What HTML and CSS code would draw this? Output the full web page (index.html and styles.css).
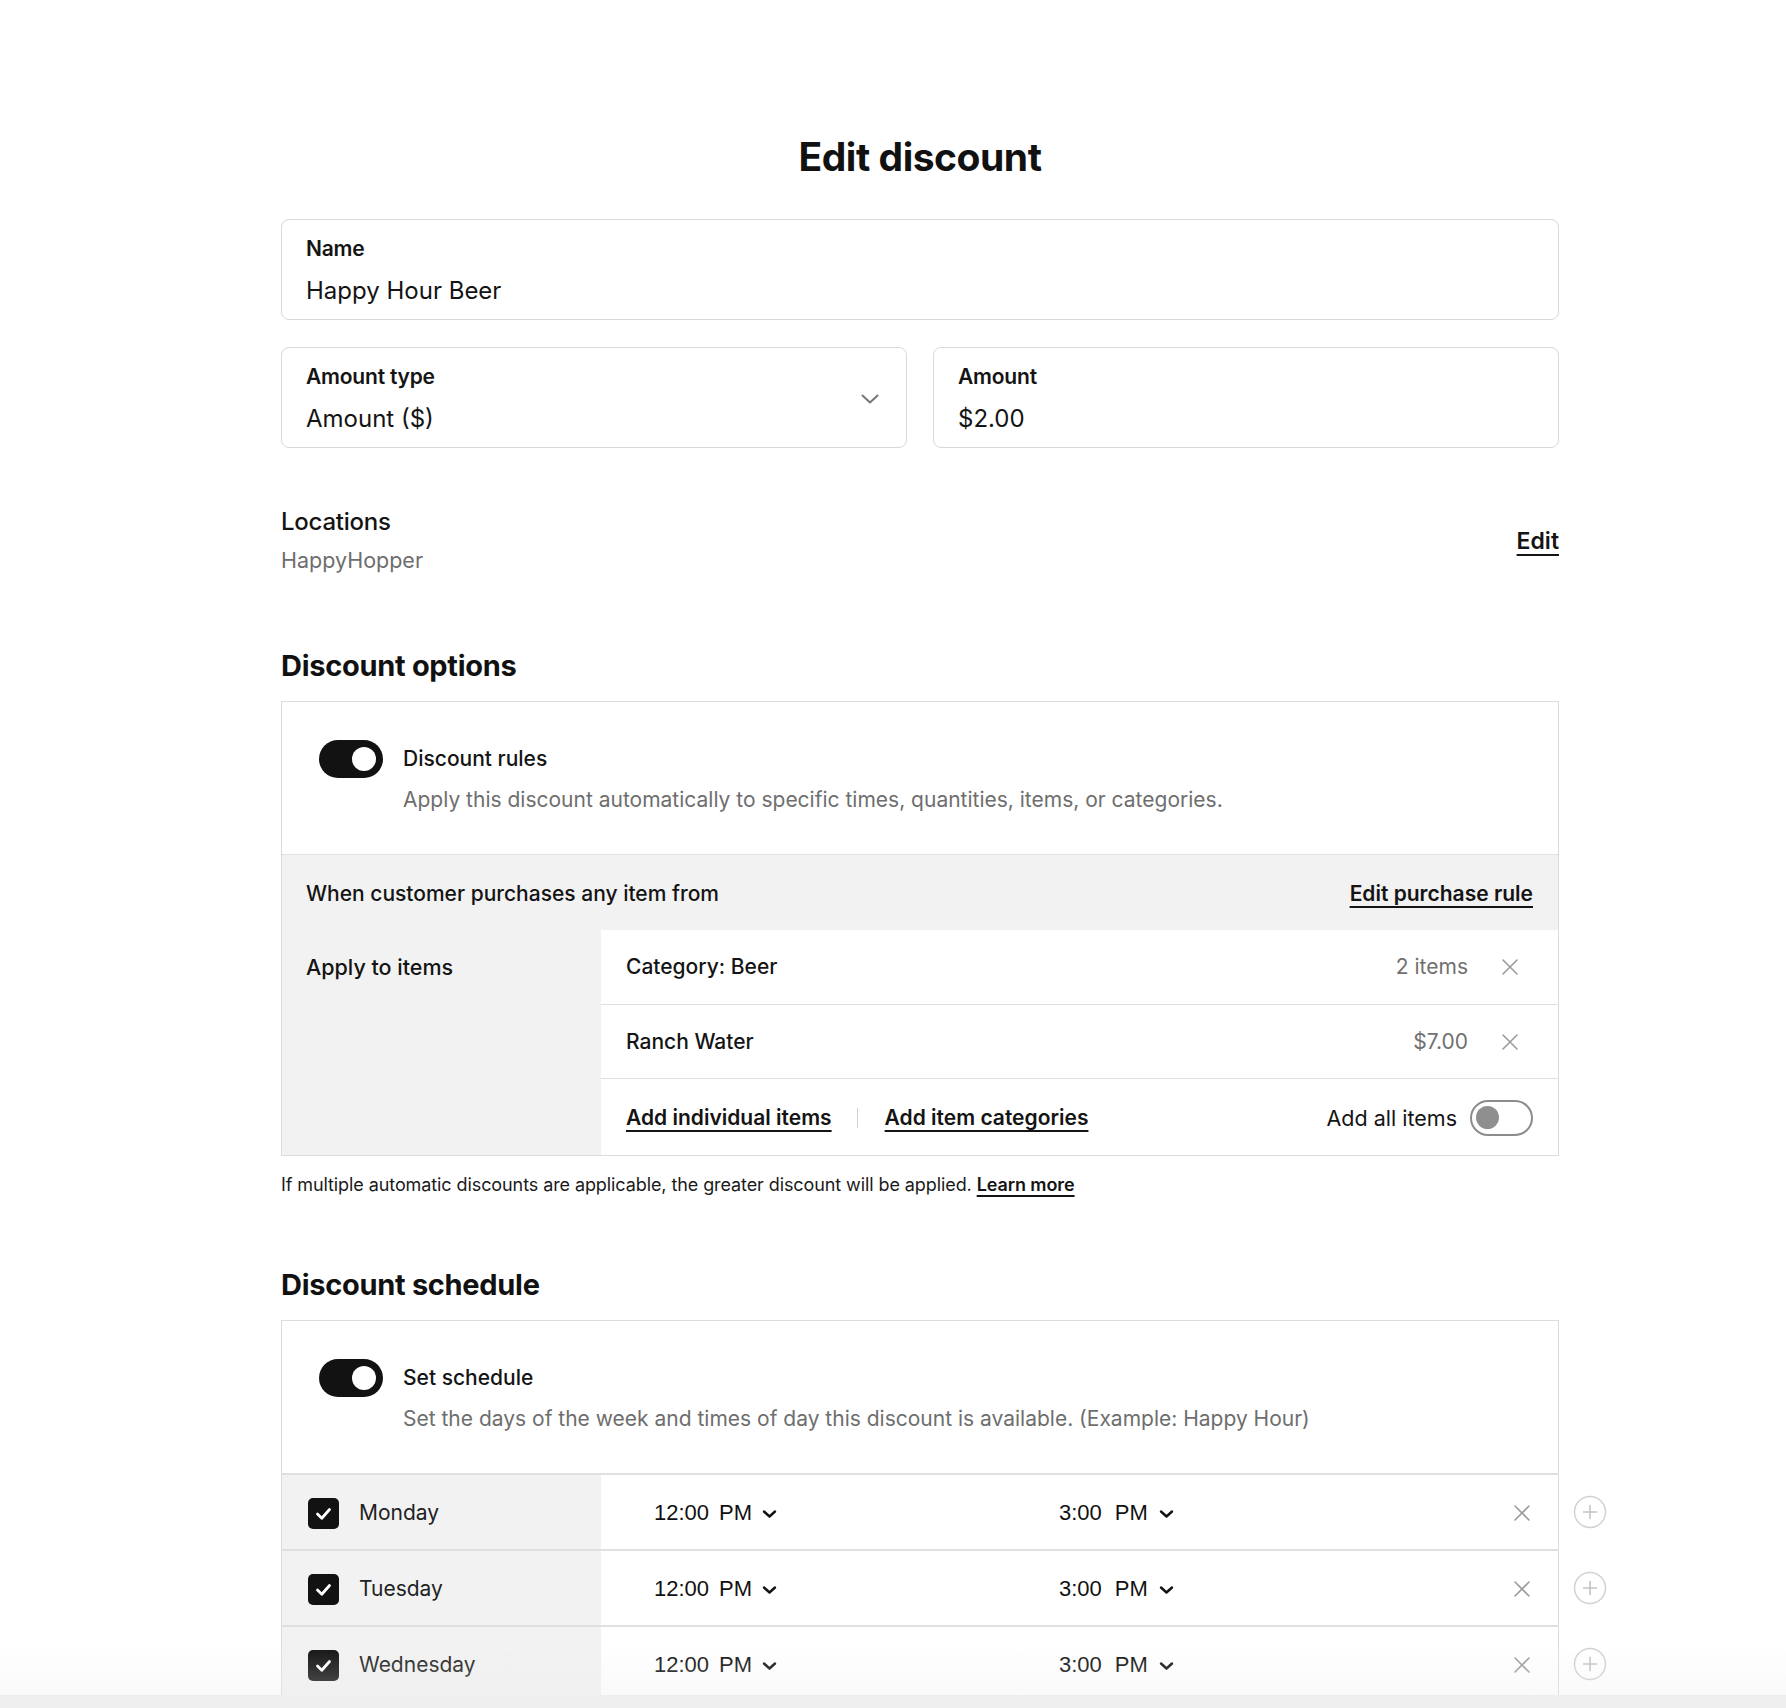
FILE: index.html
```html
<!DOCTYPE html>
<html lang="en">
<head>
<meta charset="utf-8">
<title>Edit discount</title>
<link rel="stylesheet" href="styles.css">
</head>
<body>
<main class="container">
  <h1 class="title">Edit discount</h1>

  <div class="field">
    <div class="field-label">Name</div>
    <div class="field-value">Happy Hour Beer</div>
  </div>

  <div class="field-row">
    <div class="field field-select">
      <div class="field-body">
        <div class="field-label">Amount type</div>
        <div class="field-value">Amount ($)</div>
      </div>
      <svg class="select-chevron" width="18" height="10" viewBox="0 0 18 10"><path d="M1.5 1.5 L9 8.5 L16.5 1.5" fill="none" stroke="#777" stroke-width="2" stroke-linecap="round" stroke-linejoin="round"/></svg>
    </div>
    <div class="field">
      <div class="field-label">Amount</div>
      <div class="field-value">$2.00</div>
    </div>
  </div>

  <section class="locations">
    <div>
      <div class="loc-title">Locations</div>
      <div class="loc-sub">HappyHopper</div>
    </div>
    <a class="link link-edit" href="#">Edit</a>
  </section>

  <h2 class="section-title">Discount options</h2>
  <div class="card">
    <div class="opt">
      <span class="toggle toggle-on"><span class="knob"></span></span>
      <div class="opt-text">
        <div class="opt-title">Discount rules</div>
        <div class="opt-desc">Apply this discount automatically to specific times, quantities, items, or categories.</div>
      </div>
    </div>
    <div class="rule-head">
      <span class="rule-head-text">When customer purchases any item from</span>
      <a class="link" href="#">Edit purchase rule</a>
    </div>
    <div class="rule-body">
      <div class="rule-side">Apply to items</div>
      <div class="rule-items">
        <div class="item-row">
          <span class="item-name">Category: Beer</span>
          <span class="item-meta">2 items</span>
          <svg class="x-icon" width="24" height="24" viewBox="0 0 24 24"><path d="M5 5 L19 19 M19 5 L5 19" stroke="#9b9b9b" stroke-width="1.6" stroke-linecap="round"/></svg>
        </div>
        <div class="item-row">
          <span class="item-name">Ranch Water</span>
          <span class="item-meta">$7.00</span>
          <svg class="x-icon" width="24" height="24" viewBox="0 0 24 24"><path d="M5 5 L19 19 M19 5 L5 19" stroke="#9b9b9b" stroke-width="1.6" stroke-linecap="round"/></svg>
        </div>
        <div class="item-row item-actions">
          <a class="link" href="#">Add individual items</a>
          <span class="sep"></span>
          <a class="link" href="#">Add item categories</a>
          <span class="spacer"></span>
          <span class="all-label">Add all items</span>
          <span class="toggle toggle-off"><span class="knob"></span></span>
        </div>
      </div>
    </div>
  </div>
  <p class="note">If multiple automatic discounts are applicable, the greater discount will be applied. <a class="link note-link" href="#">Learn more</a></p>

  <h2 class="section-title schedule-title">Discount schedule</h2>
  <div class="card card-top">
    <div class="opt">
      <span class="toggle toggle-on"><span class="knob"></span></span>
      <div class="opt-text">
        <div class="opt-title">Set schedule</div>
        <div class="opt-desc">Set the days of the week and times of day this discount is available. (Example: Happy Hour)</div>
      </div>
    </div>
  </div>
  <div class="sched">
    <div class="sched-row">
      <div class="sched-cell">
        <div class="day"><span class="check"><svg width="31" height="31" viewBox="0 0 31 31"><path d="M9.5 16 L13.8 20.2 L21.5 11.5" fill="none" stroke="#fff" stroke-width="2.8" stroke-linecap="round" stroke-linejoin="round"/></svg></span><span class="day-name">Monday</span></div>
        <div class="times">
          <span class="time"><span class="hh">12:00</span><span>PM</span><svg class="time-chev" width="15" height="10" viewBox="0 0 15 10"><path d="M2 2.5 L7.5 7.5 L13 2.5" fill="none" stroke="#111" stroke-width="2.4" stroke-linecap="round" stroke-linejoin="round"/></svg></span>
          <span class="time time-end"><span class="hh">3:00</span><span>PM</span><svg class="time-chev" width="15" height="10" viewBox="0 0 15 10"><path d="M2 2.5 L7.5 7.5 L13 2.5" fill="none" stroke="#111" stroke-width="2.4" stroke-linecap="round" stroke-linejoin="round"/></svg></span>
          <svg class="x-icon" width="24" height="24" viewBox="0 0 24 24"><path d="M5 5 L19 19 M19 5 L5 19" stroke="#9b9b9b" stroke-width="1.6" stroke-linecap="round"/></svg>
        </div>
      </div>
      <svg class="add-btn" width="34" height="34" viewBox="0 0 34 34"><circle cx="17" cy="17" r="15.5" fill="#fff" stroke="#d2d2d2" stroke-width="1.5"/><path d="M17 10.5 V23.5 M10.5 17 H23.5" stroke="#c4c4c4" stroke-width="1.6" stroke-linecap="round"/></svg>
    </div>
    <div class="sched-row">
      <div class="sched-cell">
        <div class="day"><span class="check"><svg width="31" height="31" viewBox="0 0 31 31"><path d="M9.5 16 L13.8 20.2 L21.5 11.5" fill="none" stroke="#fff" stroke-width="2.8" stroke-linecap="round" stroke-linejoin="round"/></svg></span><span class="day-name">Tuesday</span></div>
        <div class="times">
          <span class="time"><span class="hh">12:00</span><span>PM</span><svg class="time-chev" width="15" height="10" viewBox="0 0 15 10"><path d="M2 2.5 L7.5 7.5 L13 2.5" fill="none" stroke="#111" stroke-width="2.4" stroke-linecap="round" stroke-linejoin="round"/></svg></span>
          <span class="time time-end"><span class="hh">3:00</span><span>PM</span><svg class="time-chev" width="15" height="10" viewBox="0 0 15 10"><path d="M2 2.5 L7.5 7.5 L13 2.5" fill="none" stroke="#111" stroke-width="2.4" stroke-linecap="round" stroke-linejoin="round"/></svg></span>
          <svg class="x-icon" width="24" height="24" viewBox="0 0 24 24"><path d="M5 5 L19 19 M19 5 L5 19" stroke="#9b9b9b" stroke-width="1.6" stroke-linecap="round"/></svg>
        </div>
      </div>
      <svg class="add-btn" width="34" height="34" viewBox="0 0 34 34"><circle cx="17" cy="17" r="15.5" fill="#fff" stroke="#d2d2d2" stroke-width="1.5"/><path d="M17 10.5 V23.5 M10.5 17 H23.5" stroke="#c4c4c4" stroke-width="1.6" stroke-linecap="round"/></svg>
    </div>
    <div class="sched-row">
      <div class="sched-cell">
        <div class="day"><span class="check"><svg width="31" height="31" viewBox="0 0 31 31"><path d="M9.5 16 L13.8 20.2 L21.5 11.5" fill="none" stroke="#fff" stroke-width="2.8" stroke-linecap="round" stroke-linejoin="round"/></svg></span><span class="day-name">Wednesday</span></div>
        <div class="times">
          <span class="time"><span class="hh">12:00</span><span>PM</span><svg class="time-chev" width="15" height="10" viewBox="0 0 15 10"><path d="M2 2.5 L7.5 7.5 L13 2.5" fill="none" stroke="#111" stroke-width="2.4" stroke-linecap="round" stroke-linejoin="round"/></svg></span>
          <span class="time time-end"><span class="hh">3:00</span><span>PM</span><svg class="time-chev" width="15" height="10" viewBox="0 0 15 10"><path d="M2 2.5 L7.5 7.5 L13 2.5" fill="none" stroke="#111" stroke-width="2.4" stroke-linecap="round" stroke-linejoin="round"/></svg></span>
          <svg class="x-icon" width="24" height="24" viewBox="0 0 24 24"><path d="M5 5 L19 19 M19 5 L5 19" stroke="#9b9b9b" stroke-width="1.6" stroke-linecap="round"/></svg>
        </div>
      </div>
      <svg class="add-btn" width="34" height="34" viewBox="0 0 34 34"><circle cx="17" cy="17" r="15.5" fill="#fff" stroke="#d2d2d2" stroke-width="1.5"/><path d="M17 10.5 V23.5 M10.5 17 H23.5" stroke="#c4c4c4" stroke-width="1.6" stroke-linecap="round"/></svg>
    </div>
    <div class="sched-row">
      <div class="sched-cell">
        <div class="day"><span class="check"><svg width="31" height="31" viewBox="0 0 31 31"><path d="M9.5 16 L13.8 20.2 L21.5 11.5" fill="none" stroke="#fff" stroke-width="2.8" stroke-linecap="round" stroke-linejoin="round"/></svg></span><span class="day-name">Thursday</span></div>
        <div class="times">
          <span class="time"><span class="hh">12:00</span><span>PM</span><svg class="time-chev" width="15" height="10" viewBox="0 0 15 10"><path d="M2 2.5 L7.5 7.5 L13 2.5" fill="none" stroke="#111" stroke-width="2.4" stroke-linecap="round" stroke-linejoin="round"/></svg></span>
          <span class="time time-end"><span class="hh">3:00</span><span>PM</span><svg class="time-chev" width="15" height="10" viewBox="0 0 15 10"><path d="M2 2.5 L7.5 7.5 L13 2.5" fill="none" stroke="#111" stroke-width="2.4" stroke-linecap="round" stroke-linejoin="round"/></svg></span>
          <svg class="x-icon" width="24" height="24" viewBox="0 0 24 24"><path d="M5 5 L19 19 M19 5 L5 19" stroke="#9b9b9b" stroke-width="1.6" stroke-linecap="round"/></svg>
        </div>
      </div>
      <svg class="add-btn" width="34" height="34" viewBox="0 0 34 34"><circle cx="17" cy="17" r="15.5" fill="#fff" stroke="#d2d2d2" stroke-width="1.5"/><path d="M17 10.5 V23.5 M10.5 17 H23.5" stroke="#c4c4c4" stroke-width="1.6" stroke-linecap="round"/></svg>
    </div>
  </div>
</main>
<div class="bottom-fade"></div>
</body>
</html>
```

FILE: styles.css
```css
* { box-sizing: border-box; }

html, body {
  margin: 0;
  padding: 0;
  background: #fff;
}

body {
  font-family: Inter, "Liberation Sans", Arial, sans-serif;
  color: #141414;
  -webkit-font-smoothing: antialiased;
}

.container {
  width: 1278px;
  margin-left: 281px;
  padding-bottom: 200px;
}

.title {
  margin: 0;
  padding-top: 135px;
  font-size: 39px;
  line-height: 44px;
  font-weight: 700;
  letter-spacing: -0.012em;
  text-align: center;
  color: #111;
}

/* fields */
.field {
  margin-top: 40px;
  border: 1px solid #d9d9d9;
  border-radius: 8px;
  padding: 17px 24px 13px;
}

.field-label {
  font-size: 21px;
  line-height: 24px;
  font-weight: 600;
  letter-spacing: -0.01em;
  color: #141414;
}

.field-value {
  margin-top: 15px;
  font-size: 24px;
  line-height: 30px;
  font-weight: 400;
  color: #141414;
}

.field-row {
  margin-top: 27px;
  display: grid;
  grid-template-columns: 1fr 1fr;
  gap: 26px;
}

.field-row .field {
  margin-top: 0;
}

.field-select {
  display: flex;
  align-items: center;
  justify-content: space-between;
}

.select-chevron {
  margin-right: 3px;
  margin-top: -2px;
}

/* locations */
.locations {
  margin-top: 60px;
  display: flex;
  align-items: center;
  justify-content: space-between;
}

.loc-title {
  font-size: 24px;
  line-height: 28px;
  font-weight: 500;
  letter-spacing: -0.01em;
}

.loc-sub {
  margin-top: 10px;
  font-size: 21.5px;
  line-height: 28px;
  color: #6e6e6e;
}

.link {
  color: #141414;
  font-weight: 600;
  text-decoration: underline;
  text-decoration-thickness: 2px;
  text-underline-offset: 5px;
}

.link-edit {
  font-size: 23px;
  line-height: 28px;
}

/* sections */
.section-title {
  margin: 76px 0 19px;
  font-size: 29px;
  line-height: 32px;
  font-weight: 700;
  letter-spacing: -0.01em;
  color: #111;
}

.schedule-title {
  margin-top: 72px;
}

.card {
  border: 1px solid #dcdcdc;
}

.card-top {
  border-bottom: 0;
}

.opt {
  display: flex;
  align-items: flex-start;
  gap: 20px;
  padding: 38px 37px 40px;
}

.opt-text {
  padding-top: 5px;
}

.opt-title {
  font-size: 21px;
  line-height: 28px;
  font-weight: 500;
}

.opt-desc {
  margin-top: 13px;
  font-size: 21px;
  line-height: 28px;
  color: #6e6e6e;
}

/* toggles */
.toggle {
  flex: none;
  display: inline-flex;
  align-items: center;
  border-radius: 999px;
}

.toggle-on {
  width: 64px;
  height: 38px;
  background: #121212;
  justify-content: flex-end;
  padding-right: 7px;
}

.toggle-on .knob {
  width: 24px;
  height: 24px;
  border-radius: 50%;
  background: #fff;
}

.toggle-off {
  width: 63px;
  height: 36px;
  border: 2.5px solid #8c8c8c;
  background: #fff;
  padding-left: 4px;
}

.toggle-off .knob {
  width: 23px;
  height: 23px;
  border-radius: 50%;
  background: #8f8f8f;
}

/* rule section */
.rule-head {
  height: 76px;
  background: #f2f2f2;
  border-top: 1px solid #e2e2e2;
  display: flex;
  align-items: center;
  justify-content: space-between;
  padding: 2px 25px 0 24px;
  font-size: 21px;
  line-height: 28px;
}

.rule-head-text {
  font-weight: 500;
}

.rule-body {
  display: grid;
  grid-template-columns: 319px 1fr;
  background: #f2f2f2;
}

.rule-side {
  padding: 23px 24px 0;
  font-size: 21.5px;
  line-height: 28px;
  font-weight: 500;
}

.rule-items {
  background: #fff;
}

.item-row {
  height: 74.5px;
  display: flex;
  align-items: center;
  padding: 1px 36px 0 25px;
  border-bottom: 1px solid #e0e0e0;
  font-size: 21px;
  line-height: 28px;
}

.item-name {
  flex: 1;
  font-weight: 500;
}

.item-meta {
  color: #707070;
  margin-right: 30px;
}

.x-icon {
  flex: none;
  display: block;
}

.item-actions {
  height: 76px;
  border-bottom: 0;
  padding-right: 25px;
}

.item-actions .link {
  font-size: 21px;
}

.sep {
  width: 1px;
  height: 20px;
  background: #d0d0d0;
  margin: 0 27px 0 25px;
}

.spacer {
  flex: 1;
}

.all-label {
  font-size: 21.5px;
  margin-right: 13px;
}

.note {
  margin: 17px 0 0;
  font-size: 18px;
  line-height: 24px;
  color: #1a1a1a;
  letter-spacing: -0.005em;
}

.note-link {
  text-decoration-thickness: 1.5px;
  text-underline-offset: 4px;
}

/* schedule */
.sched-row {
  display: flex;
  align-items: center;
  width: 1340px;
}

.sched-cell {
  width: 1278px;
  height: 76px;
  flex: none;
  display: grid;
  grid-template-columns: 319px 1fr;
  border-left: 1px solid #dcdcdc;
  border-right: 1px solid #dcdcdc;
  border-top: 2px solid #e0e0e0;
}

.day {
  background: #f2f2f2;
  display: flex;
  align-items: center;
  gap: 20px;
  padding-left: 26px;
  padding-top: 2px;
}

.check {
  width: 31px;
  height: 31px;
  border-radius: 5px;
  background: #121212;
  display: block;
  flex: none;
}

.check svg {
  display: block;
}

.day-name {
  font-size: 21px;
  line-height: 28px;
  color: #222;
}

.times {
  display: grid;
  grid-template-columns: 405px 1fr auto;
  align-items: center;
  padding: 2px 24px 0 53px;
}

.time {
  display: inline-flex;
  align-items: center;
  gap: 10px;
  font-family: "Liberation Sans", Arial, sans-serif;
  font-size: 22px;
  line-height: 28px;
  color: #111;
}

.time-end {
  gap: 11px;
}

.time-end .hh {
  margin-right: 2px;
}

.time-chev {
  display: block;
  margin-top: 2px;
}

.add-btn {
  display: block;
  margin-left: 14px;
  margin-top: 2px;
  flex: none;
}

.bottom-fade {
  position: fixed;
  left: 0;
  right: 0;
  bottom: 0;
  height: 64px;
  background: linear-gradient(to bottom, rgba(240, 240, 240, 0) 0%, rgba(238, 238, 238, 0.3) 79%, #efefef 80%, #efefef 100%);
  pointer-events: none;
}
```
